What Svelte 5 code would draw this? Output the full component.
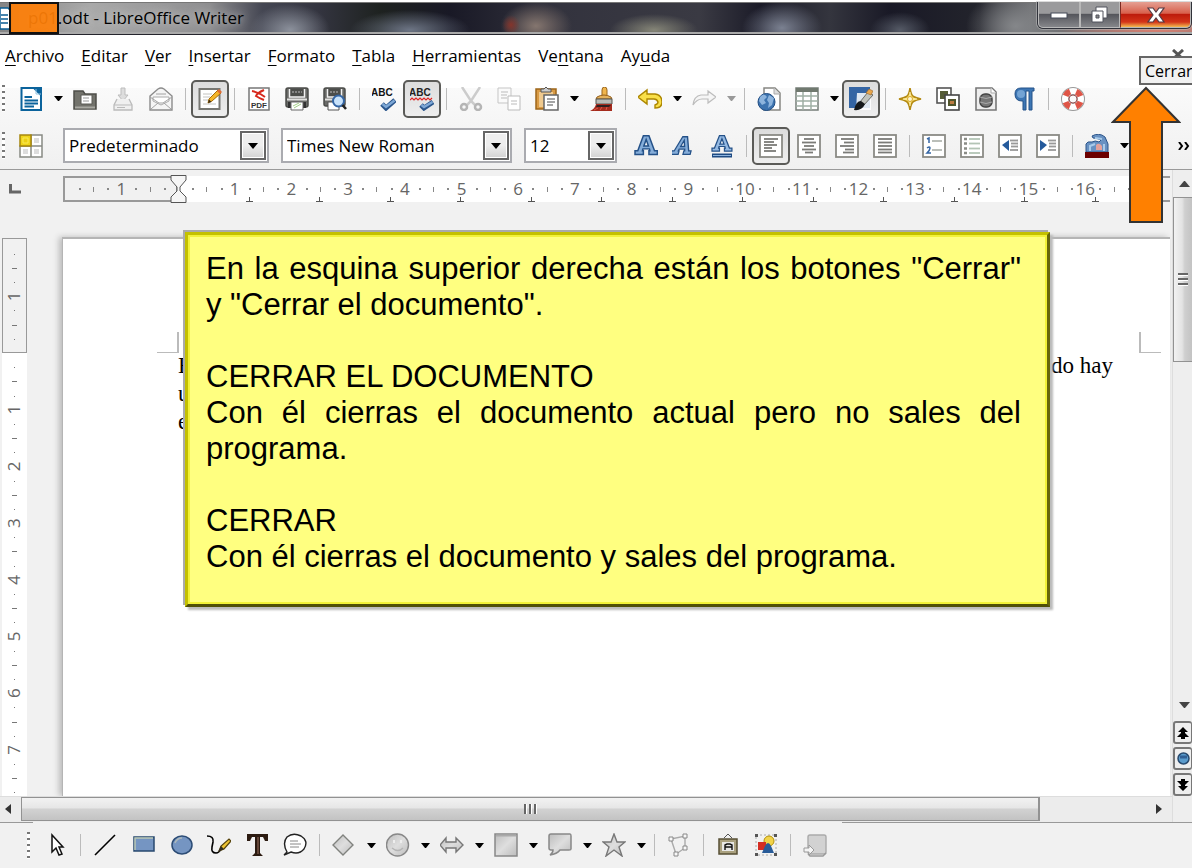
<script>
  const menus = [
    ['', 'A', 'rchivo'], ['', 'E', 'ditar'], ['', 'V', 'er'], ['', 'I', 'nsertar'], ['', 'F', 'ormato'],
    ['', 'T', 'abla'], ['', 'H', 'erramientas'], ['Ve', 'n', 'tana'], ['Ay', 'u', 'da']
  ];

  const sheet = '<rect x="1" y="1" width="22" height="22" fill="#fff" stroke="#8b8b85" stroke-width="1.8"/>';
  const lines = (rows, color = '#7b7b78') =>
    rows.map(([x1, x2, y]) => `<path d="M${x1} ${y}H${x2}" stroke="${color}" stroke-width="1.8"/>`).join('');
  const letterA = 'M9 2H15L21 18H24V22H15V18H16L15.500 16H8.500L8 18H9V22H0V18H3ZM12 6L9.500 13H14.500Z';

  const icons = {
    new: '<path d="M2.500 1H15L22 8V23H2.500Z" fill="#fff" stroke="#0b639c" stroke-width="2"/><path d="M14 0H23V9Z" fill="#0b639c"/><path d="M17 2V7H22" stroke="#8fc3e2" fill="none"/><path d="M5.500 10H13M5.500 13.500H19M5.500 16.500H19M5.500 19.500H15" stroke="#0b639c" stroke-width="1.800"/>',
    open: '<path d="M1 4H10L12 7H23V22H1Z" fill="#73736c" stroke="#4d4d48" stroke-width="1.500"/><path d="M8 8H19V17H8Z" fill="#fff" stroke="#5a5a55"/><path d="M10 11H16M10 14H16" stroke="#999"/><path d="M2 20.500H22" stroke="#a9a9a2" stroke-width="2"/>',
    save: '<path d="M10 1H14V8H17L12 14L7 8H10Z" fill="#ddd" stroke="#bdbdbd"/><path d="M6 12L3 18V23H21V18L18 12" fill="#f0f0f0" stroke="#bbb" stroke-width="1.300"/><path d="M3 18H21M6 20.500H14" stroke="#bbb"/>',
    mail: '<path d="M1 9L9 2Q12 0 15 2L23 9V23H1Z" fill="#f5f5f5" stroke="#8c8c8c" stroke-width="1.400"/><path d="M4 10H20V14L12 18L4 14Z" fill="#fff" stroke="#aaa"/><path d="M7 7H17M1 10L10 16H14L23 10M2 22L9 16M22 22L15 16" stroke="#a2a2a2" fill="none"/>',
    edit: '<rect x="1.500" y="2" width="20" height="20" fill="#fff" stroke="#777772" stroke-width="2"/><path d="M5 7H14M5 10H12M5 13H10M5 17H18" stroke="#c3c3c0"/><path d="M10 16L11 12L20 3L23 6L14 14Z" fill="#f5b629" stroke="#a76b08"/><path d="M19 4L21 2L24 5L22 7Z" fill="#df6a32"/><path d="M10 16L11 12.500L13.500 15Z" fill="#3b2c13"/>',
    pdf: '<rect x="2" y="1" width="20" height="22" fill="#fff" stroke="#777" stroke-width="1.500"/><path d="M5 4Q11 5 18 10M17 3Q10 6 9 9Q12 11 17 13" stroke="#d7291c" stroke-width="2" fill="none"/><text x="4" y="21" font-family="Liberation Sans" font-weight="700" font-size="8" fill="#333">PDF</text>',
    print: '<rect x="1" y="1" width="22" height="19" rx="2" fill="#6a6b68" stroke="#4b4c49" stroke-width="1.500"/><path d="M4.500 2V10H19.500V2" fill="#4c4d4a" stroke="#f2f2f2" stroke-width="1.500"/><path d="M7 5H17" stroke="#bbb" stroke-dasharray="2 1"/><path d="M2 12.500H22" stroke="#e2e2e0" stroke-width="2"/><path d="M3 15H21V21H3Z" fill="#333"/><path d="M6 15H18V23H6Z" fill="#fff" stroke="#666"/><path d="M8 19L14 16M9 21L16 17" stroke="#a3cf87"/>',
    preview: '<rect x="1" y="1" width="21" height="18" rx="2" fill="#6a6b68" stroke="#4b4c49" stroke-width="1.500"/><path d="M4.500 2V10H18.500V2" fill="#4c4d4a" stroke="#f2f2f2" stroke-width="1.500"/><path d="M7 5H16" stroke="#bbb" stroke-dasharray="2 1"/><path d="M2 12.500H21" stroke="#e2e2e0" stroke-width="2"/><path d="M5 15H16V23H5Z" fill="#fff" stroke="#555"/><circle cx="15.500" cy="14" r="5.500" fill="#c8e2fa" stroke="#3465a4" stroke-width="2"/><path d="M19.500 18L23 22" stroke="#222" stroke-width="2.500"/>',
    spell: '<text x="-1" y="9" font-family="Liberation Sans" font-weight="700" font-size="10" fill="#111">ABC</text><path d="M10 17L14 21L23 13" fill="none" stroke="#2a568c" stroke-width="5"/><path d="M10.500 17L14 20L22.500 13.500" fill="none" stroke="#7ea8d6" stroke-width="2.500"/>',
    autospell: '<text x="-1" y="9" font-family="Liberation Sans" font-weight="700" font-size="10" fill="#222">ABC</text><path d="M0 13L2 11L4 13L6 11L8 13L10 11L12 13L14 11L16 13L18 11L20 13L22 11" fill="none" stroke="#df2525" stroke-width="1.200"/><path d="M11 18L14 21L23 15" fill="none" stroke="#2a568c" stroke-width="5"/><path d="M11.500 18L14 20L22.500 15" fill="none" stroke="#7ea8d6" stroke-width="2.500"/>',
    cut: '<path d="M3 0L12 14L16 18M21 0L12 14L8 18" stroke="#ccc" stroke-width="2.500" fill="none"/><circle cx="5" cy="20" r="3" fill="none" stroke="#b5b5b5" stroke-width="2.500"/><circle cx="19" cy="20" r="3" fill="none" stroke="#b5b5b5" stroke-width="2.500"/>',
    copy: '<path d="M1 1H14V16H1Z" fill="#fafafa" stroke="#c5c5c5"/><path d="M4 5H11M4 8H10M4 11H10" stroke="#bbb"/><path d="M11 9H23V23H11Z" fill="#fff" stroke="#bbb"/><path d="M14 14H20M14 17H20" stroke="#bbb"/>',
    paste: '<rect x="1" y="2" width="20" height="20" fill="#d99b45" stroke="#9d661a" stroke-width="1.500"/><path d="M4 5H18V20H4Z" fill="#efc98e"/><path d="M6 5V2H9L11 0L13 2H16V5Z" fill="#ccc" stroke="#555"/><path d="M9 8H23V23H9Z" fill="#fff" stroke="#666" stroke-width="1.500"/><path d="M12 12H20M12 15H20M12 18H18" stroke="#888" stroke-width="1.300"/>',
    brush: '<path d="M13 9V3Q13 0 15.500 0Q18 0 18 3V9Z" fill="#f0b54c" stroke="#99651b"/><path d="M8 10Q15 6 22 10L23 12H7Z" fill="#e5b25b" stroke="#97611d"/><path d="M7 12H23V17H7Z" fill="#b9bab6" stroke="#555753"/><path d="M7 17H23V24H1Q6 22 7 17Z" fill="#a52b1d"/><path d="M8 18H22L20 20H7Z" fill="#302020"/><path d="M5 23L9 21M11 23L13 20M17 23L18 20" stroke="#de5848"/>',
    undo: '<path d="M0 10L9 3V7H17Q24 8 24 15Q24 21 17 21V18Q20 17 20 15Q19 12 16 12H9V17Z" fill="#f9df48" stroke="#ad8700" stroke-width="1.400"/>',
    redo: '<path d="M24 10L16 4V8H9Q2 9 1 18Q5 12 10 12H16V16Z" fill="#f5f5f5" stroke="#bcbcbc" stroke-width="1.200"/>',
    globe: '<path d="M7 1H18L23 6V23H7Z" fill="#fff" stroke="#878783" stroke-width="1.500"/><path d="M17 1V7H23" fill="#ddd" stroke="#aaa"/><circle cx="9.500" cy="15" r="8.500" fill="#3c73af" stroke="#214d83"/><path d="M3 10Q7 5 10 10L7 13L9 16L5 18L2 14ZM12 8L17 11L15 18L11 21L12 16L10 13Z" fill="#8db4dd"/>',
    table: '<rect x="1" y="1" width="22" height="22" fill="#fff" stroke="#767d78" stroke-width="1.500"/><path d="M1 1H23V5H1Z" fill="#70796f"/><path d="M1 9H23M1 14H23M1 19H23M8 5V23M16 5V23" stroke="#a0b0a5" stroke-width="1.500"/>',
    draw: '<rect x="0" y="0" width="21" height="21" fill="#3465a4"/><path d="M8 6L22 6V23H7Z" fill="#fff" opacity=".85"/><path d="M11 15L19 5L24 8L15 18Z" fill="#c2c4bd" stroke="#696b66"/><path d="M17 6L20 2L24 4L22 8Z" fill="#e8a64c" stroke="#98672a" stroke-width=".6"/><path d="M5 23Q7 14 12 14L16 17Q13 24 5 23Z" fill="#16191b"/>',
    compass: '<path d="M12 1Q13 8 15.500 9.500Q18 11 23 12Q18 13 15.500 14.500Q13 16 12 23Q11 16 8.500 14.500Q6 13 1 12Q6 11 8.500 9.500Q11 8 12 1Z" fill="#f9dd69" stroke="#b38911" stroke-width="1.600"/><path d="M12 5V19M5 12H19" stroke="#fff3bd"/><circle cx="12" cy="12" r="2.500" fill="#fff6d1" stroke="#d8a92c"/>',
    gallery: '<rect x="1" y="1" width="14" height="15" fill="#fff" stroke="#555" stroke-width="1.600"/><rect x="4" y="4" width="8" height="8" fill="#555b36"/><rect x="9" y="8" width="14" height="15" fill="#fff" stroke="#444" stroke-width="1.600"/><rect x="12" y="12" width="8" height="7" fill="#50552c"/><path d="M14 14H18V17H14Z" fill="#bd7b42"/>',
    database: '<path d="M2 1H18L22 5V23H2Z" fill="#eee" stroke="#777" stroke-width="1.600"/><path d="M17 1V6H22" fill="#fff" stroke="#aaa"/><rect x="6" y="7" width="12" height="13" rx="5" fill="#777" stroke="#444" stroke-width="1.500"/><path d="M6 10Q12 13 18 10M6 15Q12 18 18 15" stroke="#aaa" fill="none"/>',
    pilcrow: '<path d="M22 1H9Q3 1 3 7Q3 14 10 14H11V23H14V4H17V23H20V4H22Z" fill="#3d76b4" stroke="#245289"/><circle cx="9" cy="7" r="4" fill="#73a3d4"/>',
    help: '<circle cx="12" cy="12" r="8" fill="none" stroke="#999" stroke-width="8"/><circle cx="12" cy="12" r="8" fill="none" stroke="#fff" stroke-width="6"/><circle cx="12" cy="12" r="8" fill="none" stroke="#df5547" stroke-width="6" stroke-dasharray="6.280 6.280" transform="rotate(22 12 12)"/><circle cx="12" cy="12" r="4" fill="#fafafa" stroke="#955"/>',
    styles: '<path d="M12 1H23V12H12ZM1 12H12V23H1ZM12 12H23V23H12Z" fill="#fff" stroke="#888a84" stroke-width="1.500"/><path d="M1 1H12V12H1Z" fill="#f0d51b" stroke="#a7870e" stroke-width="1.500"/><path d="M15 4H20V9H15ZM4 15H9V20H4ZM15 15H20V20H15Z" fill="#ddd"/><path d="M4 4H9V9H4Z" fill="#edd014" stroke="#fae95a"/>',
    bold: `<g transform="translate(1 0) scale(.93)"><path d="${letterA}" fill="#85add9" fill-rule="evenodd" stroke="#245188" stroke-width="1.600"/></g>`,
    italic: `<g transform="translate(4 1) scale(.8 .88) skewX(-16)"><path d="${letterA}" fill="#85add9" fill-rule="evenodd" stroke="#245188" stroke-width="1.600"/></g>`,
    underline: `<g transform="translate(2 0) scale(.83 .78)"><path d="${letterA}" fill="#94b9e2" fill-rule="evenodd" stroke="#245188" stroke-width="1.500"/></g><path d="M2 21.500H22" stroke="#1e4b83" stroke-width="4"/><path d="M3 21.500H21" stroke="#8eb4df"/>`,
    left: sheet + lines([[5, 19, 5], [5, 15, 8], [5, 18, 11], [5, 13, 14], [5, 17, 17]]),
    center: sheet + lines([[7, 17, 5], [5, 19, 8.5], [7, 17, 12], [5, 19, 15.5], [8, 16, 18.5]]),
    right: sheet + lines([[6, 19, 5], [9, 19, 8.5], [5, 19, 12], [10, 19, 15.5], [8, 19, 18.5]]),
    justify: sheet + lines([[5, 19, 5], [5, 19, 8.5], [5, 19, 12], [5, 19, 15.5], [5, 19, 18.5]]),
    numbers: sheet + lines([[10, 20, 7], [10, 20, 16]], '#b3b7b2') + '<path d="M5 5L7 4V9M5 14Q8 12 8 14Q8 16 5 19H9" fill="none" stroke="#3465a4" stroke-width="1.500"/>',
    bullets: sheet + lines([[9, 20, 5], [9, 20, 9.5], [9, 20, 14.5], [9, 20, 19]], '#b3c4b5') + '<path d="M4 5H7M4 9.500H7M4 14.500H7M4 19H7" stroke="#8a8c86" stroke-width="2.500"/>',
    outdent: sheet + lines([[12, 20, 6.5], [13, 20, 9.5], [13, 20, 12.5], [12, 20, 16]], '#999') + '<path d="M4 11L11 6V17Z" fill="#245a9c"/>',
    indent: sheet + lines([[12, 20, 6.5], [13, 20, 9.5], [13, 20, 12.5], [12, 20, 16]], '#999') + '<path d="M11 11L4 6V17Z" fill="#245a9c"/>',
    fontcolor: '<path d="M1 18V10Q2 7 7 8Q10 6 14 8L16 6Q12 4 8 4L7 2Q14 -2 20 3L23 10V18Z" fill="#6891c2" stroke="#2b5489"/><path d="M5 17V12L10 10M19 17V10M10 4L17 5" stroke="#a9cbea" stroke-width="2" fill="none"/><path d="M11 16V11Q14 8 17 12V16Z" fill="#e4a19b"/><path d="M0 18H24V24H0Z" fill="#6c0000"/>',
    pointer: '<path d="M8 2V19L12 15L15 22L18 21L15 14H19Z" fill="#fff" stroke="#111" stroke-width="1.500"/>',
    line: '<path d="M2 22L22 2" stroke="#000" stroke-width="1.600"/>',
    rect: '<rect x="3" y="4" width="20" height="14" fill="#7595c2" stroke="#28496f" stroke-width="1.500"/><path d="M4 17V5H22" stroke="#bbc7b5" stroke-width="1.500" fill="none"/>',
    ellipse: '<ellipse cx="13" cy="12" rx="10" ry="9" fill="#7595c2" stroke="#2c4c75" stroke-width="1.500"/><path d="M6 10Q8 5 13 5" stroke="#adb8ba" stroke-width="1.500" fill="none"/>',
    pen: '<path d="M0 3Q7 3 6 9L5 14Q4 20 9 20Q12 20 14 16" fill="none" stroke="#000" stroke-width="1.600"/><path d="M12 18L14 13L22 6L24 8L17 16Z" fill="#edc333" stroke="#544109" stroke-width="1.200"/><path d="M11 19L14 13L17 16Z" fill="#322d21"/>',
    text: '<path d="M2 1H23V8H20L18 4H15V20L18 23H7L10 20V4H7L5 8H2Z" fill="#2c1b11"/><path d="M13 4V21" stroke="#765446" stroke-width="1.500"/>',
    comment: '<path d="M4 19Q-1 10 4 4Q10-1 18 3Q26 8 21 16Q16 22 8 19L1 22Z" fill="#fff" stroke="#222" stroke-width="1.400"/><path d="M7 8H15M7 11H18M7 14H16" stroke="#888"/>',
    diamond: '<path d="M11 2L21 12L11 22L1 12Z" fill="url(#silver)" stroke="#80827e" stroke-width="1.400"/>',
    smiley: '<circle cx="11.500" cy="12" r="11" fill="url(#silver)" stroke="#888" stroke-width="1.400"/><path d="M8 7V10M15 7V10" stroke="#eee" stroke-width="2"/><path d="M6 15Q12 20 17 15" stroke="#b5b5b5" stroke-width="1.500" fill="none"/>',
    arrows: '<path d="M0 12L6 5V9H16V5L23 12L16 19V15H6V19Z" fill="url(#silver)" stroke="#777" stroke-width="1.400"/>',
    flow: '<rect x="1" y="1" width="22" height="22" fill="url(#silver)" stroke="#888" stroke-width="1.500"/><path d="M2 2.500H22" stroke="#aaa" stroke-width="2"/>',
    callout: '<path d="M3 1H22Q23 1 23 3V16Q23 17 21 17H12Q9 21 2 22Q5 20 5 17H3Q1 17 1 15V3Q1 1 3 1Z" fill="url(#silver)" stroke="#888" stroke-width="1.500"/>',
    star: '<path d="M12 1L15 9H23L17 14L20 23L12 17L4 23L7 14L1 9H9Z" fill="url(#silver)" stroke="#777" stroke-width="1.400"/>',
    points: '<path d="M4 6L18 3V15L9 21Z" fill="none" stroke="#aaa" stroke-width="1.400"/><path d="M2 4H6V8H2ZM16 1H20V5H16ZM16 13H20V17H16ZM7 19H11V23H7Z" fill="#f8f8f8" stroke="#888"/>',
    fontwork: '<path d="M8 5L12 1L16 5" stroke="#555" fill="none"/><path d="M3 6H21V21H3Z" fill="#aaa17f" stroke="#574f35" stroke-width="1.500"/><path d="M6 9H18V18H6Z" fill="#e8e8e6"/><path d="M9 17V12L11 11H14L16 12V17M9 14H16" fill="none" stroke="#111" stroke-width="1.400"/>',
    picture: '<rect x="2" y="2" width="20" height="20" fill="none" stroke="#aaa" stroke-dasharray="2 2"/><circle cx="15" cy="8" r="5" fill="#f2d348" stroke="#b5920b"/><path d="M4 9H12V17H4Z" fill="#d42d22"/><path d="M8 20L11 13Q14 7 17 13L20 20Z" fill="#285b98"/><path d="M1 1H4V4H1ZM20 1H23V4H20ZM1 20H4V23H1ZM20 20H23V23H20Z" fill="#555"/>',
    extrude: '<rect x="5" y="2" width="18" height="19" rx="2" fill="#d2d2d2" stroke="#aaa" stroke-width="1.400"/><path d="M5 21L7 23H20L23 20" fill="none" stroke="#999" stroke-width="1.400"/><path d="M1 15H6V12L11 17L6 22V19H1Z" fill="#f4f4f4" stroke="#999"/>'
  };

  const b = (icon, label, pressed = false) => ({ kind: 'button', icon, label, pressed });
  const d = (label, off = false) => ({ kind: 'drop', label, off });
  const sep = { kind: 'sep' };

  const standard = [
    b('new', 'Nuevo'), d('Opciones de nuevo'), b('open', 'Abrir'), b('save', 'Guardar'), b('mail', 'Enviar por correo'), sep,
    b('edit', 'Editar archivo', true), sep,
    b('pdf', 'Exportar como PDF'), b('print', 'Imprimir'), b('preview', 'Vista previa'), sep,
    b('spell', 'Ortografía'), b('autospell', 'Revisión automática', true), sep,
    b('cut', 'Cortar'), b('copy', 'Copiar'), b('paste', 'Pegar'), d('Opciones de pegar'), b('brush', 'Pincel de formato'), sep,
    b('undo', 'Deshacer'), d('Lista de deshacer'), b('redo', 'Restaurar'), d('Lista de restaurar', true), sep,
    b('globe', 'Hiperenlace'), b('table', 'Tabla'), d('Opciones de tabla'), b('draw', 'Funciones de dibujo', true), sep,
    b('compass', 'Navegador'), b('gallery', 'Galería'), b('database', 'Fuentes de datos'), b('pilcrow', 'Caracteres no imprimibles'), sep,
    b('help', 'Ayuda')
  ];
  const formatting = [
    b('bold', 'Negrita'), b('italic', 'Cursiva'), b('underline', 'Subrayado'), sep,
    b('left', 'Izquierda', true), b('center', 'Centrado'), b('right', 'Derecha'), b('justify', 'Justificado'), sep,
    b('numbers', 'Numeración'), b('bullets', 'Viñetas'), b('outdent', 'Reducir sangría'), b('indent', 'Aumentar sangría'), sep,
    b('fontcolor', 'Color de fuente'), d('Colores')
  ];
  const drawing = [
    b('pointer', 'Selección'), sep,
    b('line', 'Línea'), b('rect', 'Rectángulo'), b('ellipse', 'Elipse'), b('pen', 'Línea a mano alzada'), b('text', 'Texto'), b('comment', 'Leyenda'), sep,
    b('diamond', 'Formas básicas'), d('Más formas'), b('smiley', 'Símbolos'), d('Más símbolos'), b('arrows', 'Flechas'), d('Más flechas'),
    b('flow', 'Diagramas'), d('Más diagramas'), b('callout', 'Llamadas'), d('Más llamadas'), b('star', 'Estrellas'), d('Más estrellas'), sep,
    b('points', 'Puntos'), sep, b('fontwork', 'Fontwork'), b('picture', 'Desde archivo'), sep, b('extrude', 'Extrusión')
  ];

  const UNIT = 56.7;
  const across = Array.from({ length: 16 }, (_, i) => i + 1);
  const down = Array.from({ length: 7 }, (_, i) => i + 1);
  const quarters = (from, to) => {
    const marks = [];
    for (let q = from; q < to; q++) if (q % 4 !== 0) marks.push({ at: (q / 4) * UNIT, half: q % 2 === 0 });
    return marks;
  };
  const marksAcross = quarters(-7, 70);
  const marksDown = quarters(-7, 34);
  const tabs = Array.from({ length: 13 }, (_, i) => Math.round((i + 1) * 70.5));
</script>

{#snippet tools(items)}
  {#each items as item}
    {#if item.kind === 'sep'}
      <span class="sep"></span>
    {:else if item.kind === 'drop'}
      <button class="drop" class:off={item.off} aria-label={item.label}><svg width="9" height="5" viewBox="0 0 9 5"><path d="M0 0H9L5 5H4Z" fill="currentColor" /></svg></button>
    {:else}
      <button class="tool" class:pressed={item.pressed} aria-label={item.label}><svg width="24" height="24" viewBox="0 0 24 24">{@html icons[item.icon]}</svg></button>
    {/if}
  {/each}
{/snippet}

<svg class="defs" width="0" height="0" aria-hidden="true">
  <defs><linearGradient id="silver" x1="0" y1="0" x2="1" y2="1"><stop offset="0" stop-color="#bdbdbd" /><stop offset=".5" stop-color="#dedede" /><stop offset="1" stop-color="#bcbcbc" /></linearGradient></defs>
</svg>

<div class="window">
  <header class="titlebar">
    <svg class="doc" width="12" height="24" viewBox="0 0 12 24"><path d="M0 1H8L11 4V22H0Z" fill="#fff" stroke="#0b5e94" stroke-width="1.500" /><path d="M1 8H8M1 12H8M1 16H8" stroke="#0b5e94" stroke-width="1.500" /></svg>
    <span class="title">p01.odt - LibreOffice Writer</span>
    <span class="patch"></span>
    <div class="controls">
      <button class="min" aria-label="Minimizar"><svg width="18" height="8" viewBox="0 0 18 8"><rect x="1" y="2" width="16" height="5" fill="#fff" stroke="#444a58" /></svg></button>
      <button class="max" aria-label="Restaurar"><svg width="18" height="18" viewBox="0 0 18 18"><path d="M5 1H16V12H5Z" fill="#fff" stroke="#50525c" /><path d="M1 5H12V16H1Z" fill="#fff" stroke="#50525c" /><path d="M5 9H8V12H5Z" fill="#888" stroke="#50525c" /></svg></button>
      <button class="close" aria-label="Cerrar ventana"><svg width="18" height="16" viewBox="0 0 18 16"><path d="M1 1H6L9 5L12 1H17L12 8L17 15H12L9 11L6 15H1L6 8Z" fill="#fff" stroke="#543b44" stroke-width="1.200" /></svg></button>
    </div>
  </header>

  <nav class="menubar">
    {#each menus as [before, key, after]}
      <button>{before}<u>{key}</u>{after}</button>
    {/each}
    <button class="closedoc" aria-label="Cerrar documento"><svg width="12" height="11" viewBox="0 0 12 11"><path d="M1 1L11 10M11 1L1 10" stroke="#555" stroke-width="3" /></svg></button>
  </nav>

  <div class="bars">
    <div class="toolbar standard"><span class="grip"></span>{@render tools(standard)}</div>
    <div class="toolbar formatting">
      <span class="grip"></span>
      <button class="tool" aria-label="Estilos y formato"><svg width="24" height="24" viewBox="0 0 24 24">{@html icons.styles}</svg></button>
      <div class="combos">
        <label class="combo style"><select aria-label="Aplicar estilo"><option>Predeterminado</option></select><span class="knob"></span></label>
        <label class="combo font"><select aria-label="Nombre de la fuente"><option>Times New Roman</option></select><span class="knob"></span></label>
        <label class="combo size"><select aria-label="Tamaño de fuente"><option>12</option></select><span class="knob"></span></label>
      </div>
      {@render tools(formatting)}
      <button class="more" aria-label="Más botones"><svg width="12" height="8" viewBox="0 0 12 8"><path d="M1 0L4 4L1 8M7 0L10 4L7 8" fill="none" stroke="#000" stroke-width="2" /></svg></button>
    </div>
  </div>

  <main class="work">
    <div class="column">
      <div class="hruler">
        <svg class="corner" width="12" height="10" viewBox="0 0 12 10"><path d="M1.500 0V8H12" fill="none" stroke="#666" stroke-width="3" /></svg>
        <div class="scale">
          <svg width="100%" height="28">
            <rect x="0" y="1" width="100%" height="26" fill="#fff" />
            <rect x="1" y="2" width="113" height="24" fill="#f1f1f1" stroke="#999" stroke-width="2" />
            <g transform="translate(115 0)">
              <rect x="967" y="2" width="900" height="24" fill="#f1f1f1" stroke="#999" stroke-width="2" />
              <text x={-UNIT} y="20">1</text>
              {#each across as n}<text x={n * UNIT} y="20">{n}</text>{/each}
              {#each marksAcross as m}
                <rect x={Math.round(m.at)} y={m.half ? 12 : 13} width={m.half ? 1 : 2} height={m.half ? 5 : 2} fill="#888" />
              {/each}
              {#each tabs as t}<path d="M{t + 0.5} 22V26M{t - 3} 26.500H{t + 4}" stroke="#555" />{/each}
              <path d="M-7 .5H8V5L2 12V16L8 22V27.500H-7V22L-1 16V12L-7 5Z" fill="#f6f6f6" stroke="#555" />
            </g>
          </svg>
        </div>
      </div>
      <div class="canvas">
        <div class="vruler">
          <svg width="26" height="100%">
            <rect x="0" y="0" width="25" height="100%" fill="#fff" />
            <rect x=".5" y=".5" width="24" height="114" fill="#f1f1f1" stroke="#999" />
            <g transform="translate(18 115)">
              <text transform="translate(0 {-UNIT}) rotate(-90)">1</text>
              {#each down as n}<text transform="translate(0 {n * UNIT}) rotate(-90)">{n}</text>{/each}
              {#each marksDown as m}
                <rect x={m.half ? -8 : -6} y={Math.round(m.at)} width={m.half ? 5 : 1} height="1" fill="#777" />
              {/each}
            </g>
          </svg>
        </div>
        <article class="page">
          <div class="margins"><span class="tl"></span><span class="tr"></span></div>
          <div class="body"><p><span>E</span><span>do hay</span></p><p><span>u</span></p><p><span>e</span></p></div>
        </article>
      </div>
      <div class="hscroll">
        <button class="end" aria-label="Desplazar a la izquierda"><svg width="6" height="10" viewBox="0 0 6 10"><path d="M6 0V10L0 5Z" fill="#333" /></svg></button>
        <div class="hthumb"><i></i><i></i><i></i></div>
        <button class="end right" aria-label="Desplazar a la derecha"><svg width="6" height="10" viewBox="0 0 6 10"><path d="M0 0V10L6 5Z" fill="#333" /></svg></button>
      </div>
    </div>
    <div class="vscroll">
      <button class="arrow" aria-label="Desplazar arriba"><svg width="11" height="6" viewBox="0 0 11 6"><path d="M0 6H11L6 0H5Z" fill="#444" /></svg></button>
      <div class="vthumb"><i></i><i></i><i></i></div>
      <div class="track"></div>
      <button class="arrow" aria-label="Desplazar abajo"><svg width="11" height="6" viewBox="0 0 11 6"><path d="M0 0H11L6 6H5Z" fill="#444" /></svg></button>
      <button class="jump" aria-label="Página anterior"><svg width="12" height="12" viewBox="0 0 12 12"><path d="M6 0L11 5H8V6L12 10H8V12H4V10H0L4 6V5H1Z" fill="#000" /></svg></button>
      <button class="jump" aria-label="Navegación"><svg width="13" height="13" viewBox="0 0 13 13"><circle cx="6.500" cy="6.500" r="5.500" fill="#5a9bcc" stroke="#27496e" stroke-width="1.500" /><path d="M3 5H10" stroke="#315f94" stroke-width="3" /></svg></button>
      <button class="jump" aria-label="Página siguiente"><svg width="12" height="12" viewBox="0 0 12 12"><path d="M6 12L11 7H8V6L12 2H8V0H4V2H0L4 6V7H1Z" fill="#000" /></svg></button>
    </div>
  </main>

  <footer class="toolbar drawing"><span class="grip"></span>{@render tools(drawing)}</footer>

  <section class="note">
    <p class="wide">En la esquina superior derecha están los botones "Cerrar" y "Cerrar el documento".</p>
    <h2>CERRAR EL DOCUMENTO</h2>
    <p class="wide">Con él cierras el documento actual pero no sales del programa.</p>
    <h2>CERRAR</h2>
    <p>Con él cierras el documento y sales del programa.</p>
  </section>

  <span class="tooltip">Cerrar</span>
  <svg class="pointer" width="70" height="138" viewBox="0 0 70 138"><path d="M35 2L68 36H51V136H19V36H2Z" fill="#ff8000" stroke="#333" stroke-width="2" /></svg>
</div>

<style>
  :global(body) { background: #f1f1f1; }
  .window { position: relative; display: flex; flex-direction: column; min-height: 100vh; overflow: hidden; font: 17px/22px "Open Sans", "Noto Sans", sans-serif; color: #000; }
  .window :global(*) { box-sizing: border-box; }
  button { padding: 0; border: 0; background: none; font: inherit; color: inherit; display: flex; align-items: center; justify-content: center; flex: none; }
  svg { display: block; flex: none; }
  .defs { position: absolute; }

  .titlebar { position: relative; display: flex; align-items: center; height: 35px; border-top: 2px solid #fff; border-bottom: 1px solid #24242c;
    background:
      linear-gradient(#777 0 1px, transparent 1px 30px, #aaa 30px),
      radial-gradient(ellipse 40px 26px at 290px 28px, #8c919c, transparent),
      radial-gradient(ellipse 60px 20px at 410px 28px, #6d7585, transparent),
      radial-gradient(ellipse 9px 10px at 511px 23px, #84352c, transparent),
      radial-gradient(ellipse 36px 24px at 536px 24px, #85766f, transparent),
      radial-gradient(ellipse 44px 16px at 654px 28px, #858577, transparent),
      radial-gradient(ellipse 40px 26px at 782px 26px, #7b8191, transparent),
      radial-gradient(ellipse 30px 18px at 900px 28px, #555a66, transparent),
      radial-gradient(ellipse 50px 36px at 1016px 24px, #85878a, transparent),
      radial-gradient(ellipse 100px 40px at 1156px 24px, #e08070, transparent),
      linear-gradient(90deg, #858585, #a9a9a9 90px, #8e8e90 210px, #454753 262px, #33343f 320px, #1e2220 380px, #191926 450px, #33333e 560px, #3a3a43 700px, #1b1b28 760px, #34353e 830px, #191926 890px, #23242c 980px, #6c6d70 1030px, #77777a); }
  .doc { margin-top: 2px; }
  .title { margin-left: 16px; white-space: nowrap; text-shadow: 0 0 8px #ddd; }
  .patch { position: absolute; left: 9px; top: 0; width: 50px; height: 32px; border: 2px solid #111; background: #ff8008ec; }
  .controls { display: flex; align-self: flex-start; margin-left: auto; border: 1px solid #30323a; border-top: 0; border-radius: 0 0 6px 6px; box-shadow: 0 0 0 1px #bbb8; }
  .controls button { height: 26px; border: 1px solid #b8b8b8; border-top: 0; }
  .controls .min, .controls .max { width: 42px; background: linear-gradient(#9a9a9c 0 45%, #55565c 50%, #85868a); border-radius: 0 0 0 5px; }
  .controls .max { width: 40px; border-radius: 0; }
  .controls .close { width: 71px; background: linear-gradient(#e5a093, #d8604c 45%, #bd1c0c 50%, #d33419 80%, #f4bb50); border-left-color: #7d2a22; border-radius: 0 0 5px; }

  .menubar { display: flex; align-items: center; gap: 17px; height: 42px; padding: 0 0 0 5px; background: #fff; }
  .menubar button { white-space: nowrap; display: block; }
  u { text-underline-offset: 3px; text-decoration-thickness: 1px; }
  .menubar .closedoc { margin: 0 8px 4px auto; }

  .bars { background: linear-gradient(#fff 0 11px, #fafafa 11px, #f0f0f0); border-bottom: 1px solid #999; }
  .toolbar { display: flex; align-items: center; overflow: hidden; }
  .standard { height: 43px; }
  .formatting { height: 49px; padding-top: 2px; }
  .drawing { flex: none; height: 46px; padding-left: 25px; background: linear-gradient(90deg, #999 33px, transparent 33px 842px, #999 842px) top / 100% 1px no-repeat; }
  .grip { flex: none; width: 3px; height: 27px; margin: 0 7px 0 2px; background: repeating-linear-gradient(#777 0 2px, #fff 2px 6px); }
  .tool { width: 38px; height: 38px; }
  .pressed { border: 2px solid #5b5b58; border-radius: 5px; background: linear-gradient(#dcdcdc, #eee); }
  .drop { width: 16px; height: 38px; }
  .off { color: #999; }
  .sep { flex: none; width: 1px; height: 22px; margin: 0 5px; background: #bbb; }
  .combos { display: flex; gap: 12px; margin: 0 10px 0 13px; }
  .combo { position: relative; height: 35px; }
  .style { width: 206px; }
  .font { width: 231px; }
  .size { width: 93px; }
  select { appearance: none; width: 100%; height: 100%; margin: 0; padding: 0 0 0 4px; border: 2px solid #aaabb0; border-radius: 0; background: #fff; font: inherit; color: #000; }
  .knob { position: absolute; right: 3px; top: 3px; width: 26px; height: 29px; border: 2px solid #666; box-shadow: inset 0 0 0 1px #fff; background: linear-gradient(#eee 0 50%, #d2d2d2); pointer-events: none; }
  .knob::after { content: ""; position: absolute; left: 6px; top: 10px; border: 5px solid transparent; border-top: 6px solid #000; border-bottom: 0; }
  .more { margin: 0 2px 0 auto; }

  .work { flex: 1; display: flex; min-height: 0; }
  .column { flex: 1; min-width: 0; display: flex; flex-direction: column; }
  .hruler { display: flex; align-items: center; height: 41px; padding: 0 2px 3px 9px; }
  .corner { margin-right: 42px; }
  .scale { flex: 1; min-width: 0; overflow: hidden; }
  .scale text, .vruler text { font-size: 17px; fill: #666; text-anchor: middle; }
  .canvas { flex: 1; display: flex; min-height: 0; padding: 26px 2px 0 2px; overflow: hidden; }
  .vruler { width: 26px; margin: 1px 34px 0 0; overflow: hidden; position: relative; }
  .vruler svg { position: absolute; inset: 0; }
  .page { flex: 1; min-width: 0; background: #fff; border: solid #b5b5b5; border-width: 2px 0 0 1px; box-shadow: -3px 0 6px #bbb; padding: 93px 9px 0 94px; }
  .margins { display: flex; justify-content: space-between; height: 21px; }
  .margins span { width: 22px; border-bottom: 1px solid #bbb; }
  .tl { border-right: 2px solid #bbb; }
  .tr { border-left: 2px solid #bbb; }
  .body { margin-top: -1px; padding: 0 48px 0 21px; font: 23px/28px "Liberation Serif", serif; }
  .body p { display: flex; justify-content: space-between; margin: 0; }
  .hscroll { position: relative; display: flex; height: 26px; padding-bottom: 1px; border-top: 1px solid #ddd; background: #ececec; }
  .end { width: 21px; padding-right: 5px; }
  .end.right { margin-left: auto; }
  .hthumb { display: flex; flex: 0 1 1019px; align-items: center; justify-content: center; gap: 2px; border: 1px solid #929292; border-width: 1px 2px 1px 1px; background: linear-gradient(#f2f2f2, #e6e6e6 45%, #d2d2d2 50%, #c3c3c3); }
  .hthumb i { width: 3px; height: 10px; border-left: 2px solid #666; border-right: 1px solid #fff; }
  .vscroll { flex: none; display: flex; flex-direction: column; align-items: stretch; width: 20px; padding-bottom: 26px; background: #eee; border-left: 1px solid #ddd; }
  .arrow { height: 27px; padding-left: 4px; }
  .vthumb { display: flex; flex-direction: column; align-items: center; justify-content: center; gap: 2px; height: 165px; border: 1px solid #929292; border-right: 0; background: linear-gradient(90deg, #f2f2f2, #e3e3e3 45%, #cfcfcf 60%, #c3c3c3); }
  .vthumb i { width: 10px; height: 3px; border-top: 2px solid #666; border-bottom: 1px solid #fff; }
  .track { flex: 1; }
  .jump { height: 23px; margin-top: 3px; border: 2px solid #777; border-right-width: 1px; border-radius: 3px; background: #eee; }

  .note { position: absolute; left: 185px; top: 232px; width: 865px; height: 375px; padding: 16px 26px 0 18px; background: #ffff80; border: 3px solid #c4c000; border-right-color: #66660a; border-bottom-color: #4f4f08; box-shadow: inset 0 0 0 2px #f2f238, -2px -2px 0 #aaa, 3px 3px 2px #bbb; font: 31px/36px "Liberation Sans", Arial, sans-serif; }
  .note p { margin: 0 0 36px; }
  .note .wide { text-align: justify; }
  .note h2 { margin: 0; font: inherit; }
  .tooltip { position: absolute; right: -4px; top: 56px; height: 29px; width: 57px; padding: 2px 0 0 4px; border: 2px solid #666; background: #f1f1f1; font-size: 16px; overflow: hidden; }
  .pointer { position: absolute; right: 11px; top: 86px; }
</style>
